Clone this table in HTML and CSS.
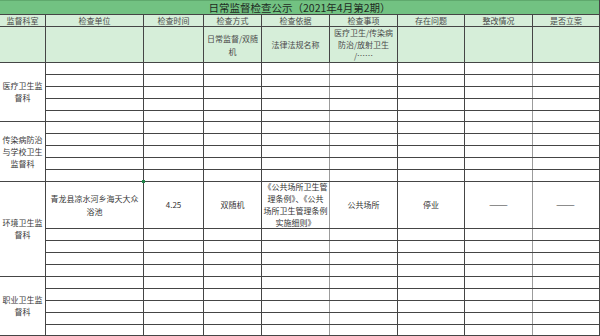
FILE: index.html
```html
<!DOCTYPE html>
<html lang="zh-CN">
<head>
<meta charset="utf-8">
<title>日常监督检查公示</title>
<link rel="stylesheet" href="styles.css">
</head>
<body>
<div class="sheet">
  <div class="title">日常监督检查公示（2021年4月第2期）</div>

  <div class="h">监督科室</div><div class="h">检查单位</div><div class="h">检查时间</div><div class="h">检查方式</div><div class="h">检查依据</div><div class="h">检查事项</div><div class="h">存在问题</div><div class="h">整改情况</div><div class="h">是否立案</div>

  <div class="s"></div><div class="s"></div><div class="s"></div><div class="s s4">日常监督/双随<br>机</div><div class="s">法律法规名称</div><div class="s s6">医疗卫生/传染病<br>防治/放射卫生<br>/……</div><div class="s"></div><div class="s"></div><div class="s"></div>

  <!-- 医疗卫生监督科 -->
  <div class="dept span5">医疗卫生监<br>督科</div>
  <div class="c"></div><div class="c"></div><div class="c"></div><div class="c"></div><div class="c l"></div><div class="c"></div><div class="c"></div><div class="c l"></div>
  <div class="c"></div><div class="c"></div><div class="c"></div><div class="c"></div><div class="c l"></div><div class="c"></div><div class="c"></div><div class="c l"></div>
  <div class="c"></div><div class="c"></div><div class="c"></div><div class="c"></div><div class="c l"></div><div class="c"></div><div class="c"></div><div class="c l"></div>
  <div class="c"></div><div class="c"></div><div class="c"></div><div class="c"></div><div class="c l"></div><div class="c"></div><div class="c"></div><div class="c l"></div>
  <div class="c"></div><div class="c"></div><div class="c"></div><div class="c"></div><div class="c l"></div><div class="c"></div><div class="c"></div><div class="c l"></div>

  <!-- 传染病防治与学校卫生监督科 -->
  <div class="dept span5">传染病防治<br>与学校卫生<br>监督科</div>
  <div class="c"></div><div class="c"></div><div class="c"></div><div class="c"></div><div class="c l"></div><div class="c"></div><div class="c"></div><div class="c l"></div>
  <div class="c"></div><div class="c"></div><div class="c"></div><div class="c"></div><div class="c l"></div><div class="c"></div><div class="c"></div><div class="c l"></div>
  <div class="c"></div><div class="c"></div><div class="c"></div><div class="c"></div><div class="c l"></div><div class="c"></div><div class="c"></div><div class="c l"></div>
  <div class="c"></div><div class="c"></div><div class="c"></div><div class="c"></div><div class="c l"></div><div class="c"></div><div class="c"></div><div class="c l"></div>
  <div class="c"></div><div class="c"></div><div class="c"></div><div class="c"></div><div class="c l"></div><div class="c"></div><div class="c"></div><div class="c l"></div>

  <!-- 环境卫生监督科 -->
  <div class="dept span5">环境卫生监<br>督科</div>
  <div class="c d lh13">青龙县凉水河乡海天大众<br>浴池</div><div class="c d mk">4.25<span class="mark"></span></div><div class="c d">双随机</div><div class="c d lh12">《公共场所卫生管<br>理条例》、《公共<br>场所卫生管理条例<br>实施细则》</div><div class="c d l">公共场所</div><div class="c d">停业</div><div class="c d"><span class="dash">——</span></div><div class="c d l"><span class="dash">——</span></div>
  <div class="c"></div><div class="c"></div><div class="c"></div><div class="c"></div><div class="c l"></div><div class="c"></div><div class="c"></div><div class="c l"></div>
  <div class="c"></div><div class="c"></div><div class="c"></div><div class="c"></div><div class="c l"></div><div class="c"></div><div class="c"></div><div class="c l"></div>
  <div class="c"></div><div class="c"></div><div class="c"></div><div class="c"></div><div class="c l"></div><div class="c"></div><div class="c"></div><div class="c l"></div>
  <div class="c"></div><div class="c"></div><div class="c"></div><div class="c"></div><div class="c l"></div><div class="c"></div><div class="c"></div><div class="c l"></div>

  <!-- 职业卫生监督科 -->
  <div class="dept span5">职业卫生监<br>督科</div>
  <div class="c"></div><div class="c"></div><div class="c"></div><div class="c"></div><div class="c l"></div><div class="c"></div><div class="c"></div><div class="c l"></div>
  <div class="c"></div><div class="c"></div><div class="c"></div><div class="c"></div><div class="c l"></div><div class="c"></div><div class="c"></div><div class="c l"></div>
  <div class="c"></div><div class="c"></div><div class="c"></div><div class="c"></div><div class="c l"></div><div class="c"></div><div class="c"></div><div class="c l"></div>
  <div class="c"></div><div class="c"></div><div class="c"></div><div class="c"></div><div class="c l"></div><div class="c"></div><div class="c"></div><div class="c l"></div>
  <div class="c"></div><div class="c"></div><div class="c"></div><div class="c"></div><div class="c l"></div><div class="c"></div><div class="c"></div><div class="c l"></div>
</div>
</body>
</html>
```

FILE: styles.css
```css
html, body {
  margin: 0;
  padding: 0;
  background: #ffffff;
}

body {
  font-family: "Noto Sans CJK SC", "Noto Sans", "DejaVu Sans", sans-serif;
  color: #333333;
  width: 600px;
  height: 336px;
  overflow: hidden;
}

.sheet {
  width: 600px;
  box-sizing: border-box;
  display: grid;
  grid-template-columns: 45px 97px 59px 57px 67px 67px 66px 67px 66px;
  grid-template-rows:
    14px 11px 35px
    11px 11px 11px 11px 10px
    11px 11px 11px 11px 11px
    46px 11px 11px 11px 11px
    11px 11px 11px 11px 10px;
  gap: 1px;
  padding: 0 1px 1px 0;
  background: #454545;
}

.title {
  grid-column: 1 / -1;
  background: #72c282;
  color: #1f2a22;
  font-size: 10.5px;
  text-align: center;
  white-space: nowrap;
  border-top: 1px solid #5fa96d;
  box-sizing: border-box;
  line-height: 13px;
}

.h, .s {
  background: #d6eed9;
  color: #4a4a4a;
  font-size: 8px;
  text-align: center;
  white-space: nowrap;
}

.h {
  line-height: 11px;
}

.s {
  display: flex;
  align-items: center;
  justify-content: center;
  line-height: 12px;
}

.s4 {
  line-height: 13px;
}

.s6 {
  line-height: 11.5px;
}

.dept {
  grid-row: span 5;
  background: #ffffff;
  display: flex;
  align-items: center;
  justify-content: center;
  text-align: center;
  font-size: 8px;
  line-height: 12px;
  color: #3a3a3a;
  white-space: nowrap;
}

.c {
  background: #ffffff;
}

.c.l {
  box-shadow: -1px 0 0 #9c9c9c;
}

.d {
  display: flex;
  align-items: center;
  justify-content: center;
  text-align: center;
  font-size: 8px;
  line-height: 12px;
  color: #333333;
  white-space: nowrap;
}

.dash {
  display: inline-block;
  font-size: 9px;
  transform: scaleX(1.25);
}

.lh13 {
  line-height: 13.5px;
}

.lh12 {
  line-height: 12px;
}

.mk {
  position: relative;
}

.mark {
  position: absolute;
  left: -2px;
  top: -2px;
  width: 3px;
  height: 3px;
  background: #21864a;
}
```
